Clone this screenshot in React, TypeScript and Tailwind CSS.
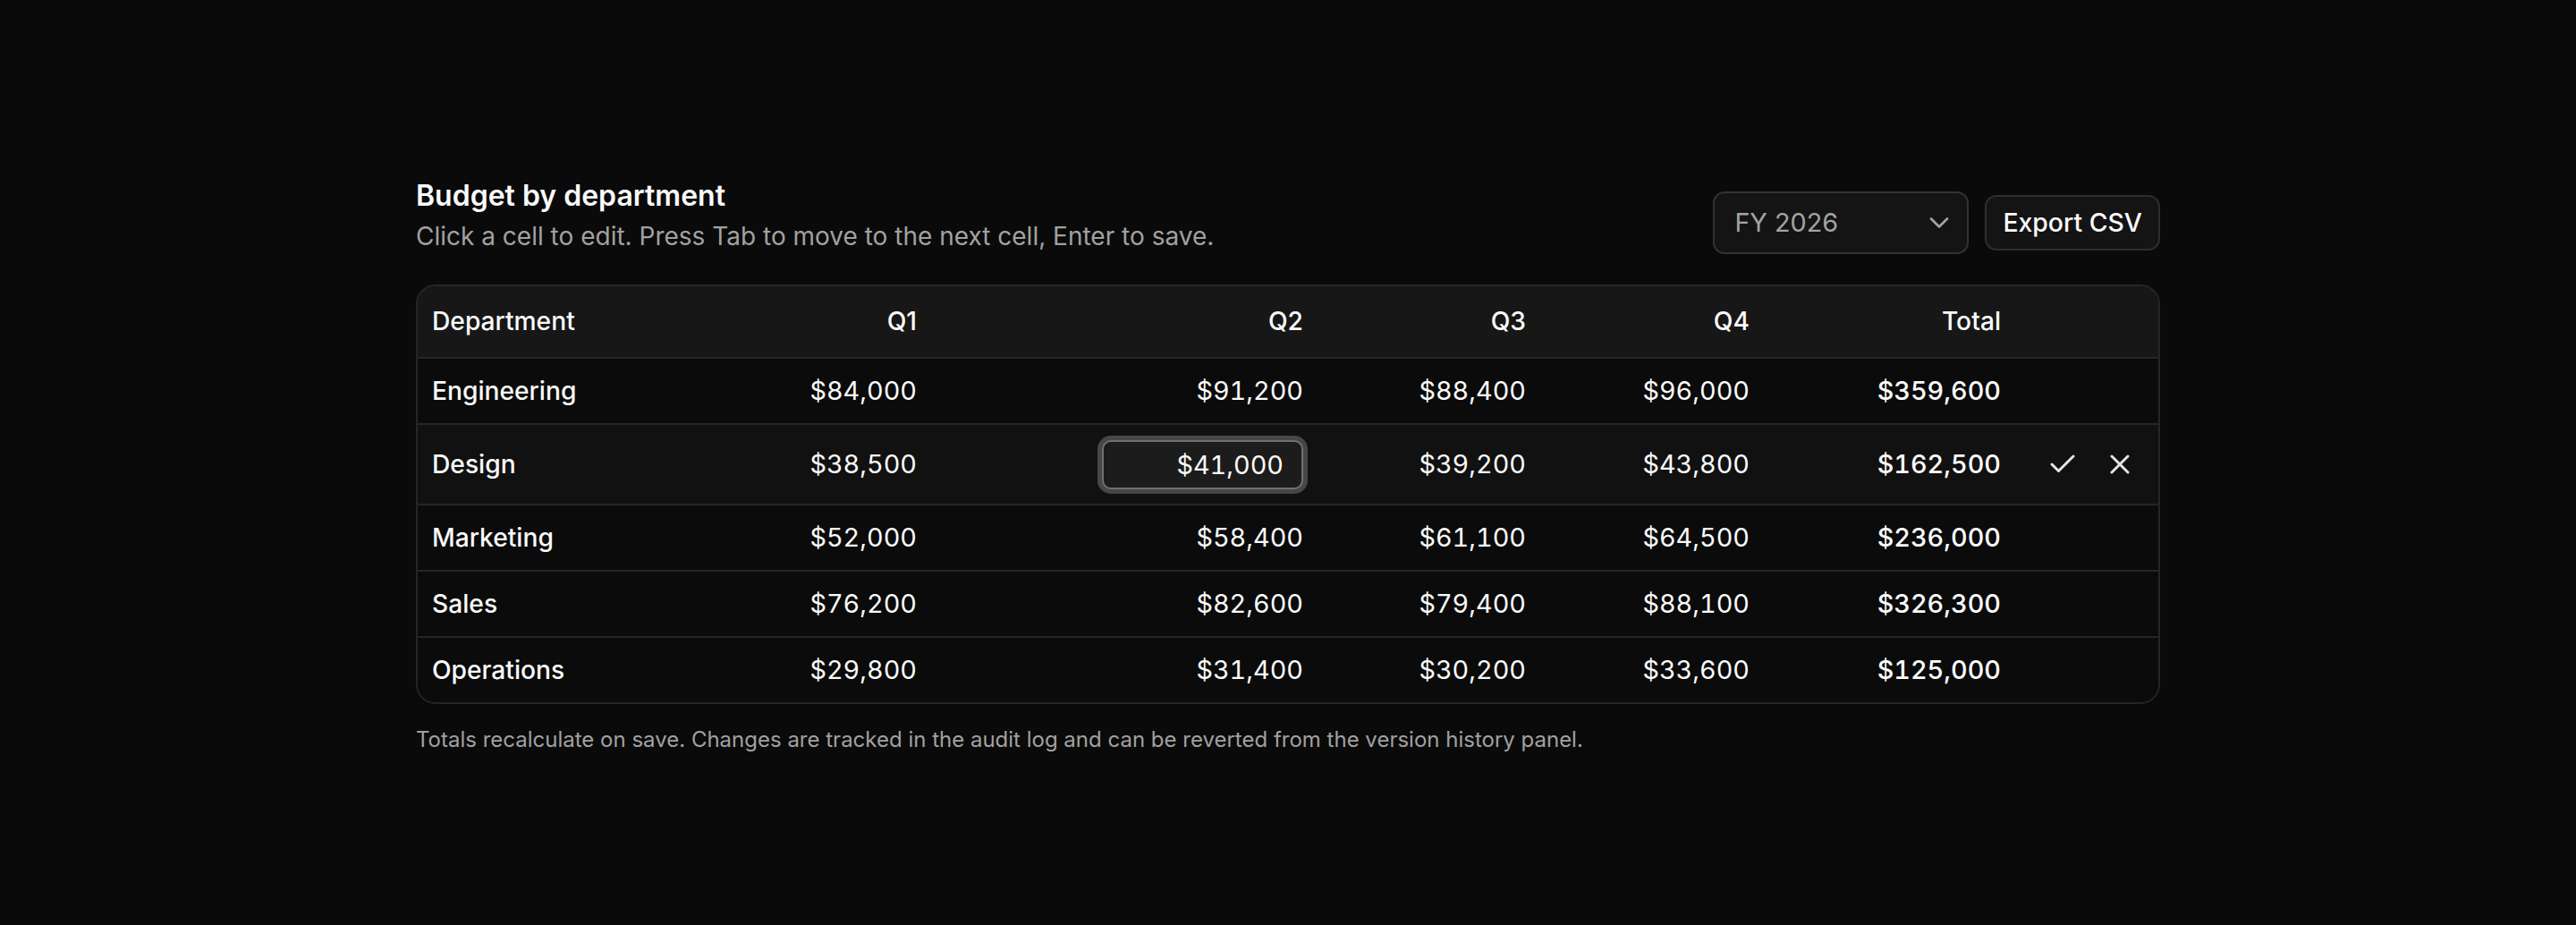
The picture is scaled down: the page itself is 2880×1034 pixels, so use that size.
import { Check, X, ChevronDown } from "lucide-react";

type Row = { dept: string; q: string[]; total: string; editing?: boolean };

const rows: Row[] = [
  { dept: "Engineering", q: ["$84,000", "$91,200", "$88,400", "$96,000"], total: "$359,600" },
  { dept: "Design", q: ["$38,500", "$41,000", "$39,200", "$43,800"], total: "$162,500", editing: true },
  { dept: "Marketing", q: ["$52,000", "$58,400", "$61,100", "$64,500"], total: "$236,000" },
  { dept: "Sales", q: ["$76,200", "$82,600", "$79,400", "$88,100"], total: "$326,300" },
  { dept: "Operations", q: ["$29,800", "$31,400", "$30,200", "$33,600"], total: "$125,000" },
];

export default function App() {
  return (
    <div className="min-h-screen bg-[#0a0a0a] font-['Inter',sans-serif] text-[#fafafa]">
      <div className="mx-auto w-[1950px] pt-[199px]">
        <div className="flex items-end justify-between">
          <div>
            <h1 className="text-[32px] font-semibold leading-[40px] text-[#fafafa]">Budget by department</h1>
            <p className="mt-[6px] text-[28px] leading-[38px] text-[#a1a1a1]">
              Click a cell to edit. Press Tab to move to the next cell, Enter to save.
            </p>
          </div>
          <div className="mb-[-1px] flex items-center gap-[18px]">
            <button className="flex h-[70px] w-[286px] items-center justify-between rounded-[13px] border-2 border-[#333333] bg-[#141414] pl-[22px] pr-[13px] text-[28.8px] text-[#a3a3a3]">
              <span>FY 2026</span>
              <ChevronDown size={36} strokeWidth={1.8} className="text-[#a3a3a3]" />
            </button>
            <button className="h-[62px] rounded-[13px] border-2 border-[#2e2e2e] bg-[#141414] px-[18px] text-[28.4px] font-medium text-[#fafafa]">
              Export CSV
            </button>
          </div>
        </div>

        <div className="mt-[35px] overflow-hidden rounded-[22px] border-2 border-[#262626]">
          <table className="w-full table-fixed text-[28.8px]">
            <colgroup>
              <col className="w-[300px]" />
              <col className="w-[274px]" />
              <col className="w-[432px]" />
              <col className="w-[249px]" />
              <col className="w-[250px]" />
              <col className="w-[281px]" />
              <col className="w-[160px]" />
            </colgroup>
            <thead>
              <tr className="border-b-2 border-[#262626] bg-[#171717]">
                <th className="px-[16px] py-[21px] text-left text-[28.2px] font-medium leading-[37px]">Department</th>
                <th className="px-[16px] py-[21px] text-right text-[28.2px] font-medium leading-[37px]">Q1</th>
                <th className="px-[16px] py-[21px] text-right text-[28.2px] font-medium leading-[37px]">Q2</th>
                <th className="px-[16px] py-[21px] text-right text-[28.2px] font-medium leading-[37px]">Q3</th>
                <th className="px-[16px] py-[21px] text-right text-[28.2px] font-medium leading-[37px]">Q4</th>
                <th className="px-[16px] py-[21px] text-right text-[28.2px] font-medium leading-[37px]">Total</th>
                <th className="px-[16px] py-[21px]"></th>
              </tr>
            </thead>
            <tbody>
              {rows.map((r, i) => (
                <tr
                  key={r.dept}
                  className={
                    (i < rows.length - 1 ? "border-b-2 border-[#262626] " : "") +
                    (r.editing ? "bg-[#111111]" : "bg-[#0b0b0b]")
                  }
                >
                  <td className="px-[16px] py-[18px] align-middle text-[28.2px] font-medium leading-[36px]">{r.dept}</td>
                  {r.q.map((v, j) =>
                    r.editing && j === 1 ? (
                      <td key={j} className="px-[16px] py-[16.5px] text-right align-middle">
                        <input
                          readOnly
                          value={v}
                          className="ml-auto block h-[55px] w-[225px] rounded-[10px] border-2 border-[#707070] bg-[#1c1c1c] px-[20px] text-right text-[28.8px] tabular-nums text-[#fafafa] shadow-[0_0_0_5px_#474747] outline-none"
                        />
                      </td>
                    ) : (
                      <td key={j} className="px-[16px] py-[18px] text-right align-middle tabular-nums leading-[36px]">
                        {v}
                      </td>
                    )
                  )}
                  <td className="px-[16px] py-[18px] text-right align-middle font-medium tabular-nums leading-[36px]">{r.total}</td>
                  <td className="py-[0px] pl-[0px] pr-[18px] align-middle">
                    {r.editing ? (
                      <div className="flex items-center justify-end gap-[14px]">
                        <button className="flex p-[7px] text-[#e5e5e5]" aria-label="Save">
                          <Check size={36} strokeWidth={2} />
                        </button>
                        <button className="flex p-[7px] text-[#e5e5e5]" aria-label="Cancel">
                          <X size={36} strokeWidth={2} />
                        </button>
                      </div>
                    ) : null}
                  </td>
                </tr>
              ))}
            </tbody>
          </table>
        </div>

        <p className="mt-[23px] text-[24px] leading-[34px] text-[#a1a1a1]">
          Totals recalculate on save. Changes are tracked in the audit log and can be reverted from the version history panel.
        </p>
      </div>
    </div>
  );
}
